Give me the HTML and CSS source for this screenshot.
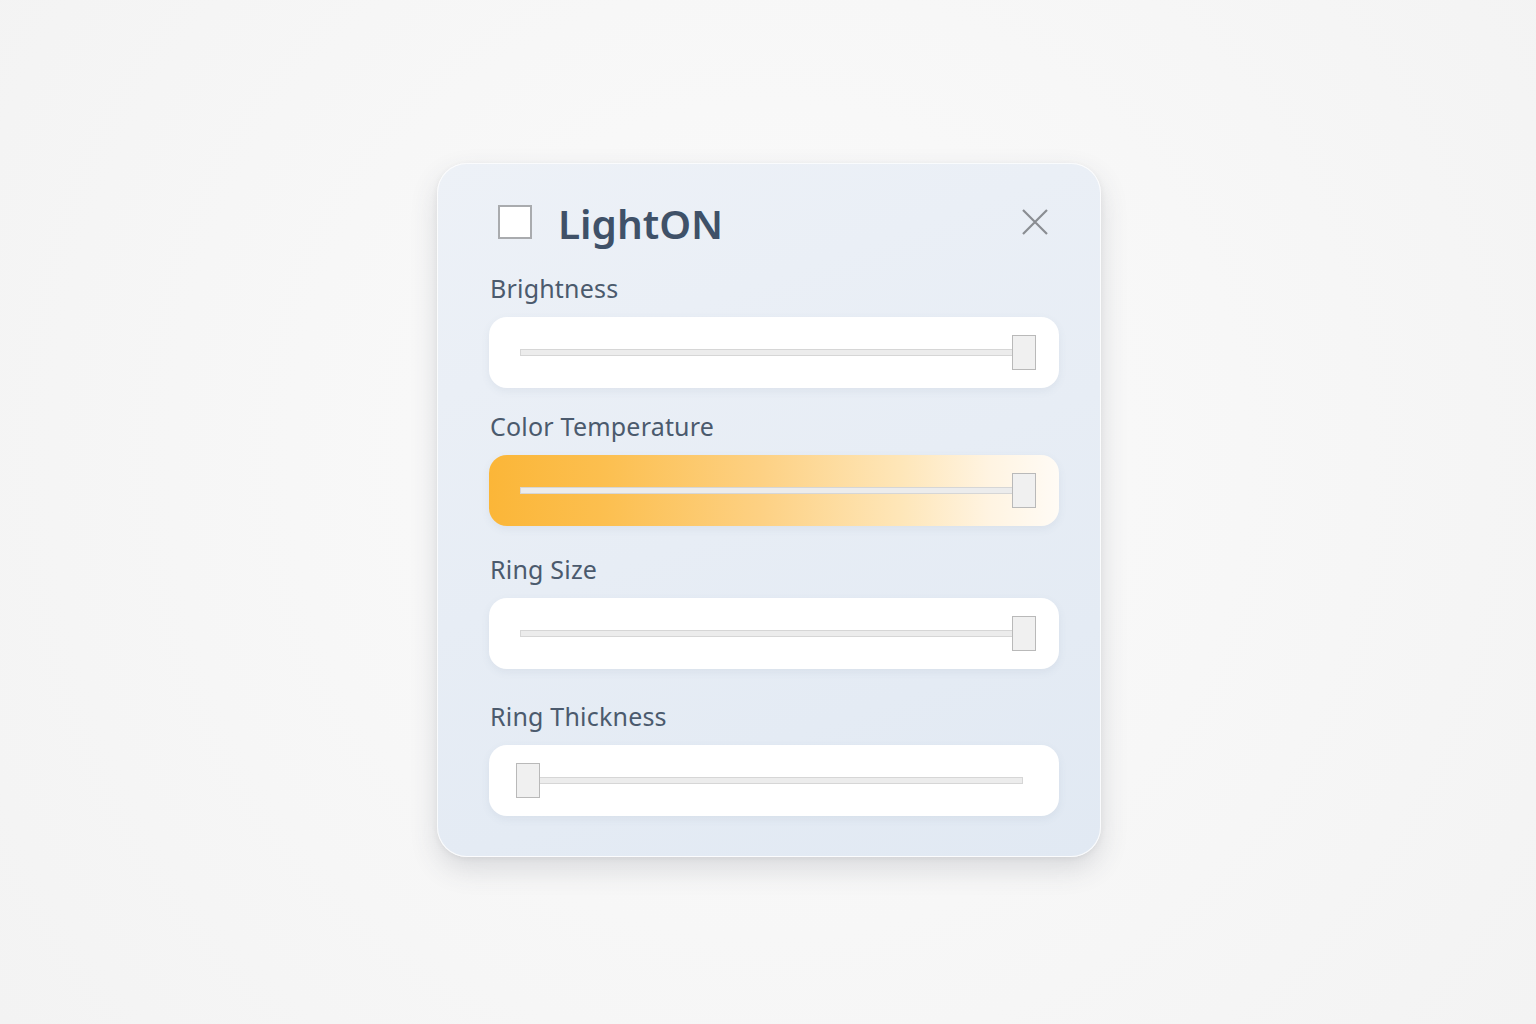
FILE: index.html
```html
<!DOCTYPE html>
<html lang="en">
<head>
  <meta charset="UTF-8" />
  <meta name="viewport" content="width=device-width, initial-scale=1.0"/>
  <title>LightON</title>
  <link rel="stylesheet" href="styles.css">
</head>
<body>
  <div class="panel">
    <div class="panel-header">
      <span class="power-box"></span>
      <h1>LightON</h1>
      <svg class="close" width="26" height="26" viewBox="0 0 26 26">
        <path d="M1 1 L25 25 M25 1 L1 25" stroke="#8a8d92" stroke-width="2.2" fill="none"/>
      </svg>
    </div>

    <section class="setting">
      <div class="label">Brightness</div>
      <div class="slider-box">
        <div class="slider">
          <div class="track"></div>
          <div class="thumb thumb-end"></div>
        </div>
      </div>
    </section>

    <section class="setting color-temp">
      <div class="label">Color Temperature</div>
      <div class="slider-box warm">
        <div class="slider">
          <div class="track"></div>
          <div class="thumb thumb-end"></div>
        </div>
      </div>
    </section>

    <section class="setting ring-size">
      <div class="label">Ring Size</div>
      <div class="slider-box">
        <div class="slider">
          <div class="track"></div>
          <div class="thumb thumb-end"></div>
        </div>
      </div>
    </section>

    <section class="setting ring-thickness">
      <div class="label">Ring Thickness</div>
      <div class="slider-box">
        <div class="slider">
          <div class="track"></div>
          <div class="thumb"></div>
        </div>
      </div>
    </section>
  </div>
</body>
</html>
```

FILE: styles.css
```css
body {
  font-family: 'Noto Sans', 'Open Sans', sans-serif;
  background: radial-gradient(circle at 50% 45%, #fbfbfb, #f3f3f3);
  margin: 0;
  height: 1024px;
  padding-top: 163px;
  box-sizing: border-box;
}

.panel {
  width: 664px;
  height: 694px;
  box-sizing: border-box;
  margin-left: 437px;
  padding: 41px 41px 40px 51px;
  display: flex;
  flex-direction: column;
  border-radius: 30px;
  background: linear-gradient(160deg, #edf1f7 0%, #e7edf5 50%, #e1e9f3 100%);
  border: 1px solid #ffffffcc;
  box-shadow: 0 12px 28px rgba(60, 70, 90, 0.16), 0 2px 6px rgba(0, 0, 0, 0.06);
}

.panel-header {
  display: flex;
  align-items: center;
  height: 34px;
  margin-bottom: 34px;
}

.power-box {
  width: 30px;
  height: 30px;
  margin-left: 9px;
  background: #fff;
  border: 2px solid #a9abae;
}

h1 {
  margin: 0 0 0 26px;
  font-size: 40.5px;
  font-weight: 600;
  color: #3f5168;
  line-height: 34px;
  position: relative;
  top: 2px;
}

.close {
  margin-left: auto;
  margin-right: 11px;
}

.color-temp {
  margin-top: 23px;
}

.ring-size {
  margin-top: 28px;
}

.ring-thickness {
  margin-top: 32px;
}

.label {
  font-size: 25px;
  letter-spacing: 0.2px;
  line-height: 30px;
  color: #4b5a6d;
  margin-left: 1px;
  margin-bottom: 14px;
}

.slider-box {
  height: 71px;
  background: #fff;
  border-radius: 18px;
  box-shadow: 0 3px 8px rgba(80, 100, 130, 0.08);
  display: flex;
  align-items: center;
  padding: 0 23px 0 27px;
}

.warm {
  background: linear-gradient(90deg, #fbb638 0%, #fcbf4f 20%, #fdd184 48%, #fee6b8 72%, #fff4e2 88%, #fffbf5 100%);
}

.slider {
  position: relative;
  flex: 1;
  height: 35px;
}

.track {
  position: absolute;
  left: 4px;
  right: 13px;
  top: 14px;
  height: 5px;
  background: #ececec;
  border: 1px solid #d6d6d6;
}

.thumb {
  position: absolute;
  top: 0;
  left: 0;
  width: 22px;
  height: 33px;
  background: #f0f0f0;
  border: 1px solid #b9b9b9;
}

.thumb-end {
  left: auto;
  right: 0;
}
```
